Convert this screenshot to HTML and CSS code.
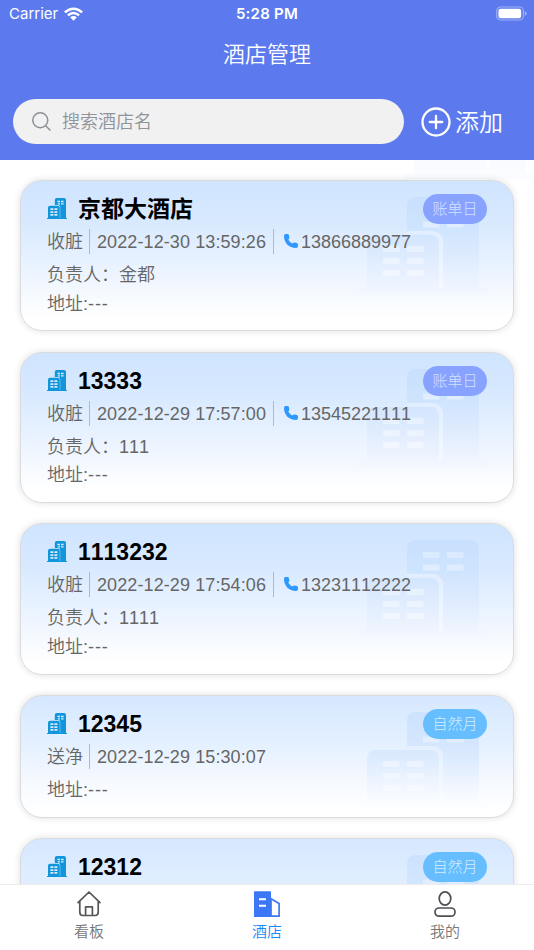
FILE: index.html
```html
<!DOCTYPE html>
<html lang="zh-CN">
<head>
<meta charset="utf-8">
<title>酒店管理</title>
<link rel="stylesheet" href="styles.css">
</head>
<body>
<svg class="defs" width="0" height="0">
  <defs>
    <linearGradient id="fade" x1="0" y1="0" x2="0" y2="97" gradientUnits="userSpaceOnUse">
      <stop offset="0" stop-color="#c7dffe"/>
      <stop offset=".3" stop-color="#cde3fe"/>
      <stop offset=".65" stop-color="#dfecfe"/>
      <stop offset="1" stop-color="#f3f7ff"/>
    </linearGradient>
    <linearGradient id="pane" x1="0" y1="0" x2="0" y2="97" gradientUnits="userSpaceOnUse">
      <stop offset="0" stop-color="#d8e9ff"/>
      <stop offset="1" stop-color="#f9fbff"/>
    </linearGradient>
  </defs>
  <symbol id="tower" viewBox="0 0 128 98">
    <path fill="url(#fade)" d="M48 35V9q0-9 9-9h54q9 0 9 9v82h8v6.500H0V91h8V47q0-9 9-9h54q9 0 9 9v44h4V47q0-12-12-12z"/>
    <path fill="url(#pane)" d="M48 34h24q12 0 12 12v45h-4V47q0-10-9-10H48zM64 12h16.500v6H64zM88 12h16.500v6H88zM64 24.500h16.500v6H64zM88 24.500h16.500v6H88zM24 49h16.500v6H24zM48 49h16.500v6H48zM24 61h16.500v6H24zM48 61h16.500v6H48zM24 73h16.500v6H24zM48 73h16.500v6H48z"/>
  </symbol>
  <symbol id="hotel" viewBox="0 0 20 21">
    <path fill="#1296db" d="M7.800 7V2q0-2 2-2H17q2 0 2 2v18h1v1H0v-1h1V9.700q0-2 2-2h7.800q2 0 2 2V20h.4V9.300Q13.200 7 11 7z"/>
    <path fill="#d9eaff" d="M10.400 2.800h2.600v1.400h-2.600zM14 2.800h2.600v1.400H14zM10.800 5.200H13v1.300h-2.200zM14 5.200h2.600v1.300H14zM3.400 10.300h3v1.700h-3zM7.400 10.300h3v1.700h-3zM3.400 13.200h3v1.700h-3zM7.400 13.200h3v1.700h-3zM3.400 16.100h3v1.700h-3zM7.400 16.100h3v1.700h-3z"/>
  </symbol>
  <symbol id="phone" viewBox="0 0 14 14">
    <path fill="#2f98ff" d="M1.500 0h2q1.200 0 1.400 1.200l.4 2q.2 1-.5 1.700l-.6.600q1.500 2.800 4.100 4.100l.7-.6q.8-.7 1.700-.5l2 .5q1.300.3 1.300 1.500V12q0 2-2 2C5 14 0 9 0 2Q0 0 1.500 0z"/>
  </symbol>
</svg>

<div class="screen">
  <header class="header">
    <div class="status">
      <div class="carrier">
        <span>Carrier</span>
        <svg class="wifi" viewBox="0 0 20 14" fill="#fff">
          <path d="M10 14 6.500 10.500Q10 7.500 13.500 10.500z"/>
          <path d="M3.200 7.500Q10 1.500 16.800 7.500L14.900 9.400Q10 5.200 5.100 9.400z"/>
          <path d="M0 4.300Q10-4.200 20 4.300L18.100 6.300Q10-.9 1.900 6.300z"/>
        </svg>
      </div>
      <span class="time">5:28 PM</span>
      <svg class="battery" viewBox="0 0 32 15">
        <rect x=".75" y=".75" width="27.500" height="13.500" rx="4" fill="none" stroke="#9fb2f5" stroke-width="1.200"/>
        <rect x="2.500" y="2.500" width="23.500" height="10" rx="2.300" fill="#fff"/>
        <path d="M29.700 5v5q2-.8 2-2.500t-2-2.500z" fill="#9fb2f5"/>
      </svg>
    </div>
    <h1 class="page-title">酒店管理</h1>
    <div class="tools">
      <div class="search">
        <svg class="search-icon" viewBox="0 0 20 20" fill="none" stroke="#8c8f94" stroke-width="1.600" stroke-linecap="round">
          <circle cx="8.700" cy="8.700" r="7.900"/><path d="m14.400 14.400 4.500 4.500"/>
        </svg>
        <span>搜索酒店名</span>
      </div>
      <div class="add">
        <svg class="add-icon" viewBox="0 0 30 30" fill="none" stroke="#fff" stroke-width="2.300" stroke-linecap="round">
          <circle cx="15" cy="15" r="13.500"/><path d="M15 8.800v12.400M8.800 15h12.400"/>
        </svg>
        <span>添加</span>
      </div>
    </div>
  </header>

  <main class="list">
    <svg class="tower previous"><use href="#tower"/></svg>
    <article class="card">
      <svg class="tower"><use href="#tower"/></svg>
      <span class="badge day">账单日</span>
      <h2 class="name"><svg class="hotel"><use href="#hotel"/></svg>京都大酒店</h2>
      <div class="meta"><span class="kind">收脏</span><span class="date">2022-12-30 13:59:26</span><span class="tel"><svg class="phone"><use href="#phone"/></svg>13866889977</span></div>
      <p class="line">负责人：<span class="person">金都</span></p>
      <p class="line">地址:<span class="dashes">---</span></p>
    </article>
    <article class="card">
      <svg class="tower"><use href="#tower"/></svg>
      <span class="badge day">账单日</span>
      <h2 class="name"><svg class="hotel"><use href="#hotel"/></svg>13333</h2>
      <div class="meta"><span class="kind">收脏</span><span class="date">2022-12-29 17:57:00</span><span class="tel"><svg class="phone"><use href="#phone"/></svg>13545221111</span></div>
      <p class="line">负责人：<span class="person">111</span></p>
      <p class="line">地址:<span class="dashes">---</span></p>
    </article>
    <article class="card">
      <svg class="tower"><use href="#tower"/></svg>
      <h2 class="name"><svg class="hotel"><use href="#hotel"/></svg>1113232</h2>
      <div class="meta"><span class="kind">收脏</span><span class="date">2022-12-29 17:54:06</span><span class="tel"><svg class="phone"><use href="#phone"/></svg>13231112222</span></div>
      <p class="line">负责人：<span class="person">1111</span></p>
      <p class="line">地址:<span class="dashes">---</span></p>
    </article>
    <article class="card pale">
      <svg class="tower"><use href="#tower"/></svg>
      <span class="badge month">自然月</span>
      <h2 class="name"><svg class="hotel"><use href="#hotel"/></svg>12345</h2>
      <div class="meta"><span class="kind">送净</span><span class="date">2022-12-29 15:30:07</span></div>
      <p class="line">地址:<span class="dashes">---</span></p>
    </article>
    <article class="card pale last">
      <svg class="tower"><use href="#tower"/></svg>
      <span class="badge month">自然月</span>
      <h2 class="name"><svg class="hotel"><use href="#hotel"/></svg>12312</h2>
    </article>
  </main>

  <nav class="tabs">
    <div class="tab">
      <svg class="tab-icon" viewBox="0 0 26 28" fill="none" stroke="#55565a" stroke-width="1.700" stroke-linejoin="round" stroke-linecap="round">
        <path d="M2 12.700 13 2l11 10.700M3.800 11.200V22q0 3.500 3 3.500h12.400q3 0 3-3.500V11.200M9.600 25.500v-8.700h6.800v8.700"/>
      </svg>
      <span>看板</span>
    </div>
    <div class="tab active">
      <svg class="tab-icon" viewBox="0 0 26 28">
        <path fill="#3c78f5" d="M0 2q0-.8.8-.8h15.400q.8 0 .8.800v25H0z"/>
        <path fill="none" stroke="#3c78f5" stroke-width="1.700" d="M17 8.800 25.100 13.500v12.600H17z"/>
        <path stroke="#fff" stroke-width="2" d="M5 9.200h7M5 15.700h7"/>
      </svg>
      <span>酒店</span>
    </div>
    <div class="tab">
      <svg class="tab-icon" viewBox="0 0 26 28" fill="none" stroke="#4e4f53" stroke-width="1.700">
        <ellipse cx="13" cy="8.500" rx="5.800" ry="6.600"/><rect x="3" y="18" width="20" height="8.200" rx="4"/>
      </svg>
      <span>我的</span>
    </div>
  </nav>
</div>
</body>
</html>
```
FILE: styles.css
```css
* { box-sizing: border-box; }

body {
  margin: 0;
  font-family: "Liberation Sans", "Noto Sans CJK SC", sans-serif;
  font-weight: 350;
  font-kerning: none;
  color: #666;
  background: #fff;
}

h1, h2, p { margin: 0; }
svg { display: block; flex: none; }
.defs { position: absolute; }

.screen {
  display: flex;
  flex-direction: column;
  width: 534px;
  height: 950px;
  overflow: hidden;
}

.header {
  flex: none;
  height: 160px;
  color: #fff;
  background: #5c7aee;
}

.status {
  display: grid;
  grid-template-columns: 1fr auto 1fr;
  align-items: center;
  height: 27px;
  padding: 0 7px 0 9px;
  font: 400 15px/27px Inter, sans-serif;
}
.carrier { display: flex; align-items: center; gap: 6px; }
.wifi { width: 19px; height: 14px; }
.time { margin-right: 2px; font-weight: 600; letter-spacing: .25px; }
.battery { width: 31px; height: 15px; justify-self: end; }

.page-title {
  height: 54px;
  padding-top: 1px;
  font-size: 22px;
  font-weight: 350;
  line-height: 54px;
  text-align: center;
}

.tools { display: flex; padding: 18px 0 0 13px; }
.search {
  display: flex;
  align-items: center;
  gap: 11px;
  width: 391px;
  height: 45px;
  padding-left: 19px;
  border-radius: 23px;
  background: #f1f1f1;
  color: #909399;
  font-size: 18px;
  line-height: 45px;
}
.search span, .add span { padding-top: 2px; }
.search-icon { width: 19px; height: 19px; }
.add {
  display: flex;
  align-items: center;
  gap: 4px;
  margin-left: 17px;
  font-size: 24px;
  line-height: 45px;
  height: 45px;
}
.add-icon { width: 30px; height: 30px; }

.list {
  position: relative;
  flex: 1;
  display: flex;
  flex-direction: column;
  gap: 20.2px;
  min-height: 0;
  padding: 20px 20px 0;
  overflow: hidden;
}

.card {
  position: relative;
  flex: none;
  padding: 13px 26px 12.400px;
  border: 1px solid #d9dbdf;
  border-radius: 22px;
  background: linear-gradient(#cfe4ff, #d9eaff 30%, #eef5ff 64%, #fff 92%);
  box-shadow: 0 0 7px rgba(0, 0, 0, .13);
}
.card.pale { background: linear-gradient(#d6e8ff, #e2efff 35%, #f5f9ff 70%, #fff 95%); }
.card.last { height: 152px; }

.tower {
  position: absolute;
  top: 16px;
  right: 26px;
  width: 128px;
  height: 98px;
  opacity: .85;
}
.pale .tower {
  opacity: .7;
  -webkit-mask-image: linear-gradient(#000 50%, transparent);
  mask-image: linear-gradient(#000 50%, transparent);
}
.tower.previous { top: -78px; right: 0; opacity: .25; }

.badge {
  position: absolute;
  top: 13px;
  right: 26px;
  width: 64px;
  height: 30px;
  border-radius: 15px;
  font-size: 15px;
  font-weight: 300;
  line-height: 30px;
  text-align: center;
}
.badge.day { background: #88a3ff; color: #d5e0ff; }
.badge.month { background: #67beff; color: #d1edff; }

.name {
  position: relative;
  display: flex;
  align-items: center;
  gap: 11px;
  height: 30px;
  color: #000;
  font-size: 23px;
  font-weight: 700;
  line-height: 30px;
}
.hotel { width: 20px; height: 21px; margin-top: -1px; }

.meta {
  position: relative;
  display: flex;
  height: 25px;
  margin: 5px 0 7px;
  font-size: 18px;
  line-height: 27px;
}
.date, .tel { border-left: 1px solid #b4b9c1; }
.kind { width: 42px; }
.date { width: 184px; padding-left: 7px; letter-spacing: .1px; }
.tel { display: flex; align-items: flex-start; gap: 3px; padding-left: 10px; }
.phone { width: 14px; height: 14px; margin-top: 5px; }

.line {
  position: relative;
  height: 28.500px;
  font-size: 18px;
  line-height: 29.500px;
}
.dashes { letter-spacing: .9px; }

.tabs {
  flex: none;
  display: flex;
  height: 66px;
  border-top: 1px solid #ececec;
  background: #fff;
  color: #777;
  font-size: 15px;
  line-height: 24px;
}
.tab {
  flex: 1;
  display: flex;
  flex-direction: column;
  align-items: center;
  padding-top: 5px;
}
.tab-icon { width: 26px; height: 28px; }
.tab span { margin-top: 2px; }
.tab.active { color: #1989fa; }
```
